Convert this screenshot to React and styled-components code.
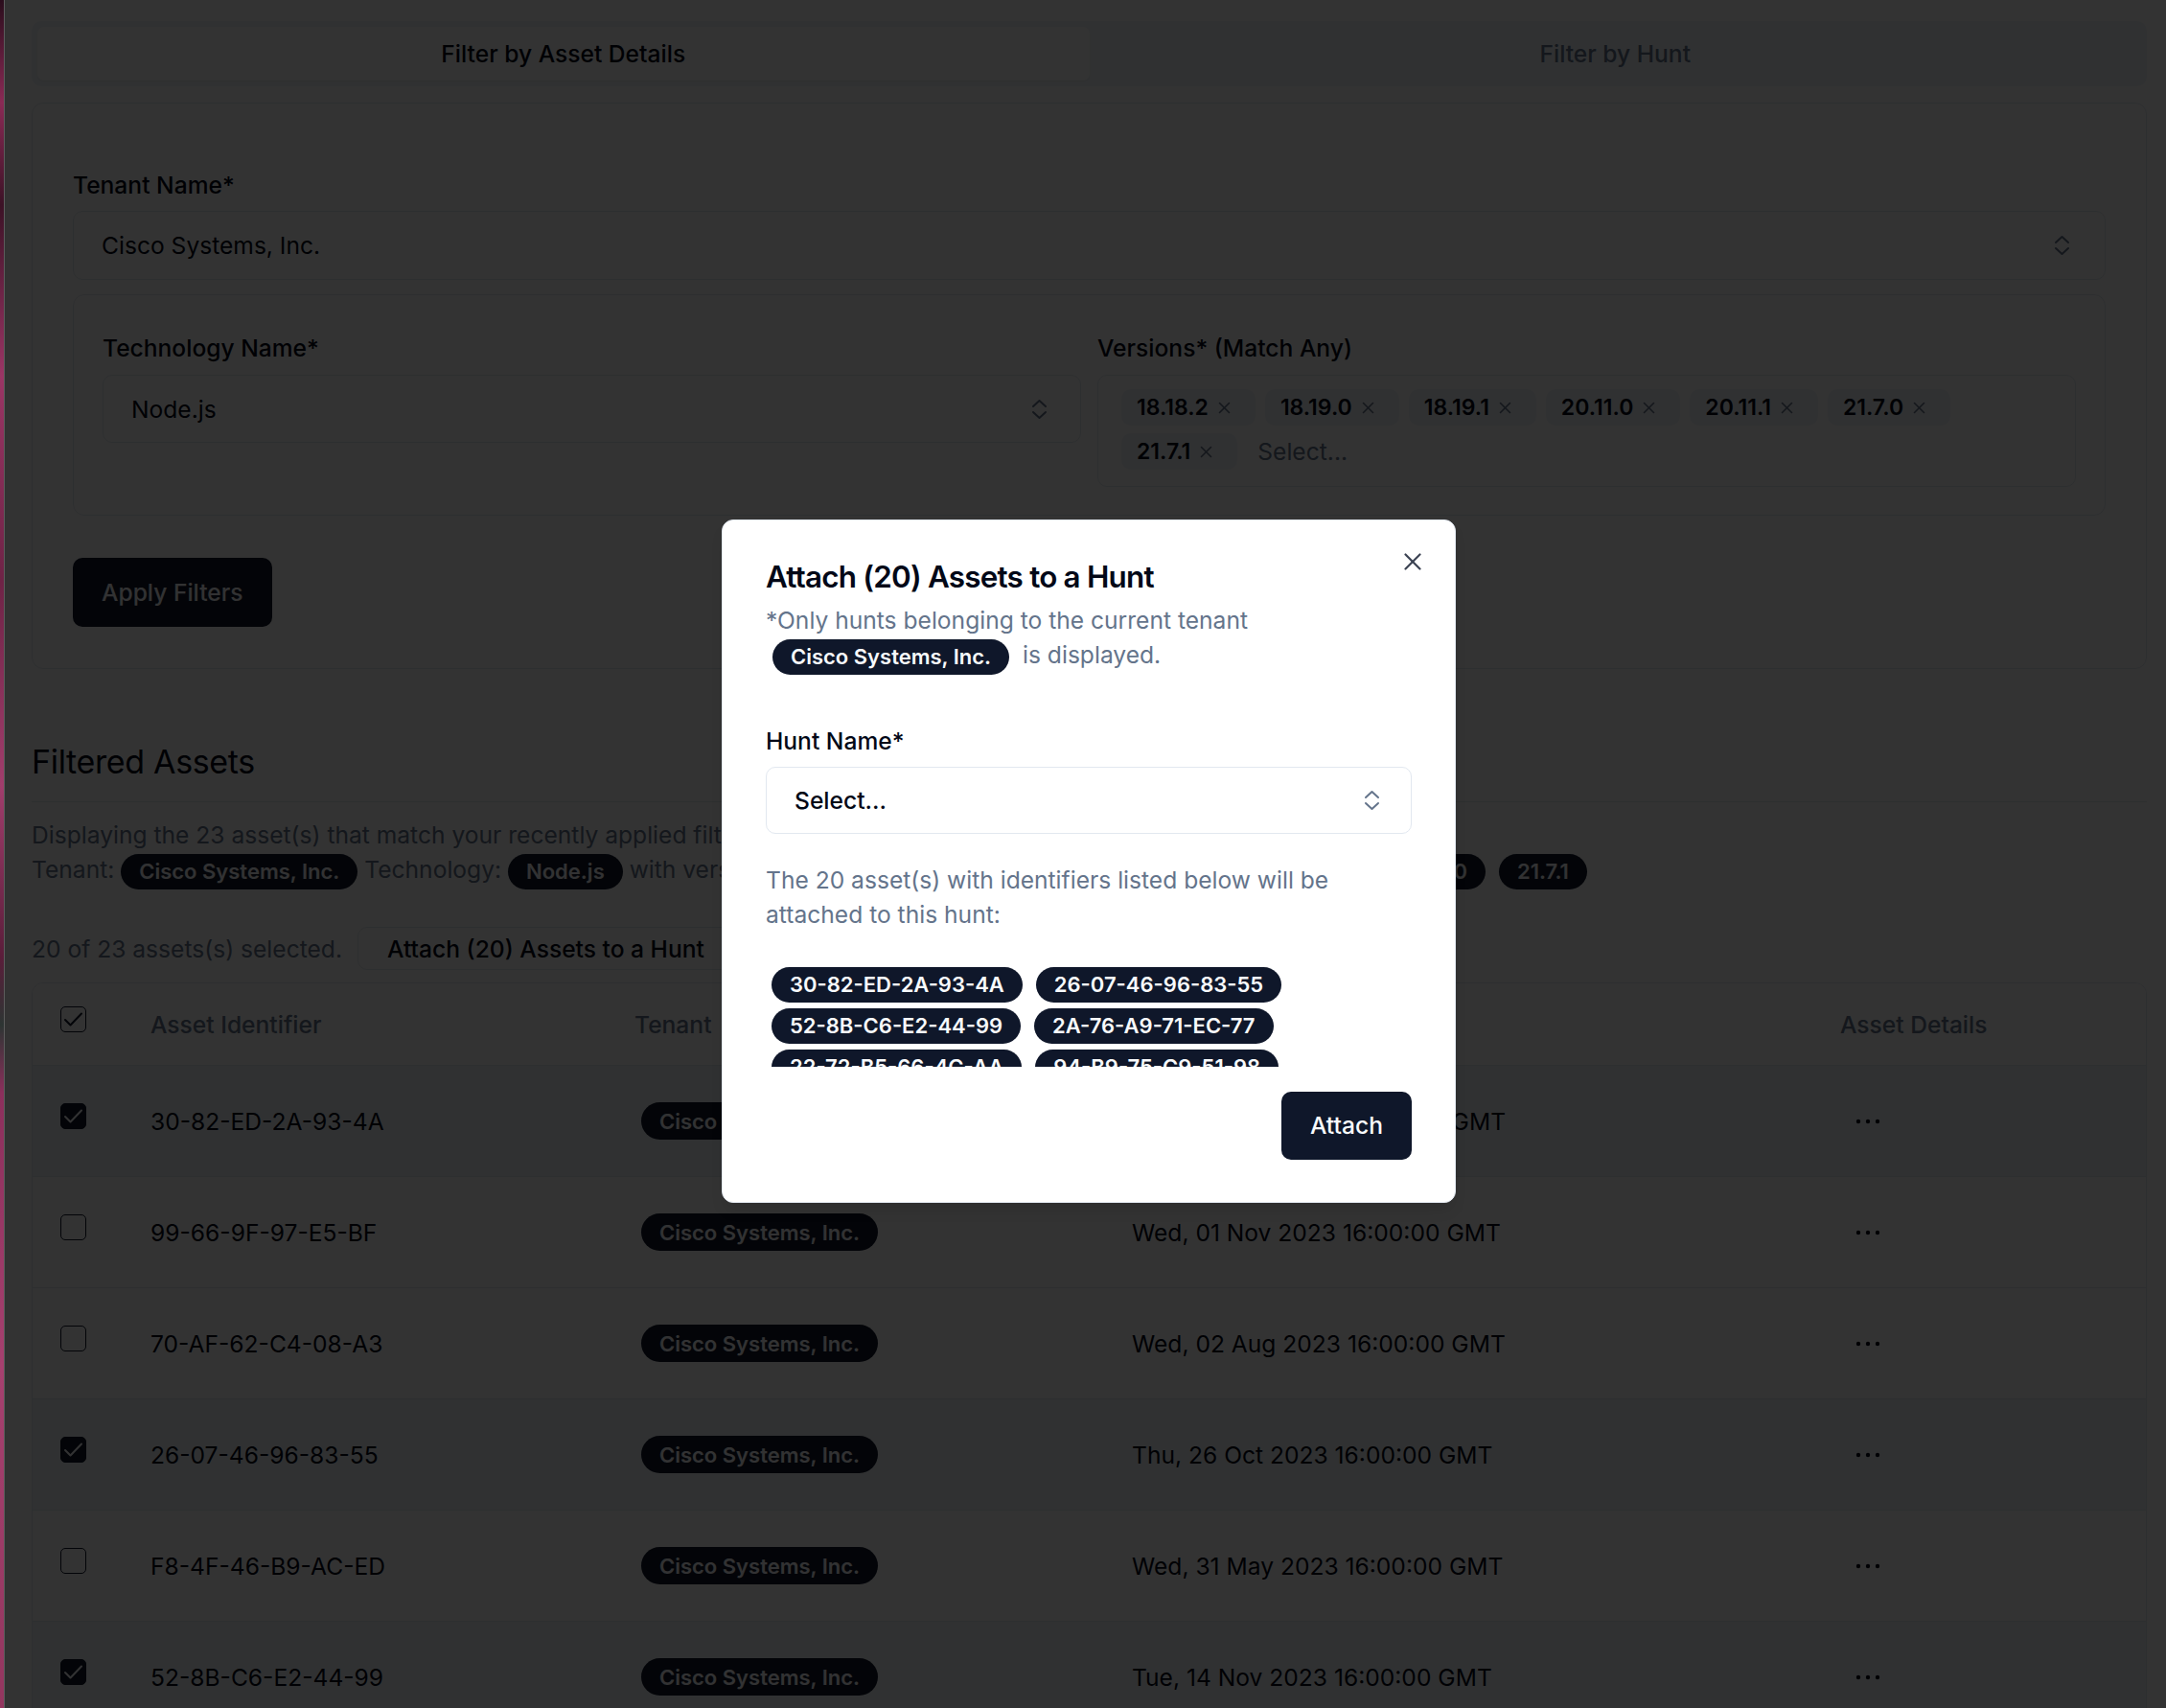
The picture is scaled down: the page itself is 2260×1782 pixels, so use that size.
import React from "react";
import styled, { createGlobalStyle, css } from "styled-components";

const C = {
  fg: "#020817",
  muted: "#64748b",
  mutedBg: "#f1f5f9",
  border: "#e2e8f0",
  primary: "#0f172a",
  primaryFg: "#f8fafc",
};

const FS = 24.6;

const Global = createGlobalStyle`
  *, *::before, *::after { box-sizing: border-box; }
  html, body { margin: 0; padding: 0; background: #333333; }
  body {
    font-family: Inter, "Noto Sans", "Liberation Sans", sans-serif;
    color: ${C.fg};
    -webkit-font-smoothing: antialiased;
  }
`;

const Screen = styled.div`
  display: flex;
  width: 2260px;
  height: 1782px;
  overflow: hidden;
`;

const DesktopEdge = styled.div`
  flex: 0 0 5px;
  background: linear-gradient(
    to bottom,
    #2a0d1c 0%,
    #8a2a55 6%,
    #3c1226 12%,
    #9b3565 22%,
    #6e2346 34%,
    #a13d6c 46%,
    #5a1d3a 56%,
    #2d3533 60%,
    #8c2f5c 64%,
    #a6406f 80%,
    #93365f 100%
  );
  border-right: 1px solid #5c5c5c;
`;

const Viewport = styled.div`
  position: relative;
  flex: 1;
  height: 100%;
  overflow: hidden;
  background: #ffffff;
`;

const Page = styled.main`
  padding: 22px 20px 0 28px;
  display: flex;
  flex-direction: column;
`;

/* ---------- Tabs ---------- */
const TabsList = styled.div`
  display: grid;
  grid-template-columns: 1fr 1fr;
  height: 68px;
  padding: 6px;
  border-radius: 10px;
  background: ${C.mutedBg};
`;

const Tab = styled.div`
  display: flex;
  align-items: center;
  justify-content: center;
  border-radius: 7px;
  font-size: ${FS}px;
  font-weight: 500;
  color: ${(p) => (p.$active ? C.fg : C.muted)};
  background: ${(p) => (p.$active ? "#ffffff" : "transparent")};
  box-shadow: ${(p) => (p.$active ? "0 1px 2px rgba(0,0,0,0.06)" : "none")};
`;

/* ---------- Filter card ---------- */
const FilterCard = styled.section`
  margin-top: 17px;
  border: 1px solid ${C.border};
  border-radius: 12px;
  padding: 70px 42px 43px;
  background: #fff;
  display: flex;
  flex-direction: column;
  align-items: flex-start;
`;

const FieldLabel = styled.label`
  display: block;
  font-size: ${FS}px;
  font-weight: 500;
  line-height: 30px;
  color: ${C.fg};
`;

const Field = styled.div`
  display: flex;
  flex-direction: column;
  align-self: stretch;
`;

const SelectBox = styled.div`
  margin-top: ${(p) => p.$gap || 12}px;
  height: ${(p) => p.$h}px;
  border: 1px solid ${C.border};
  border-radius: 10px;
  display: flex;
  align-items: center;
  justify-content: space-between;
  padding: 0 ${(p) => p.$pr}px 0 29px;
  font-size: ${FS}px;
  font-weight: ${(p) => (p.$strong ? 500 : 400)};
  color: ${C.fg};
  background: #fff;
`;

const Group = styled.div`
  align-self: stretch;
  margin-top: 15px;
  border: 1px solid ${C.border};
  border-radius: 12px;
  padding: 40px 30px 29px;
  display: grid;
  grid-template-columns: 1fr 1fr;
  column-gap: 17px;
`;

const MultiSelect = styled.div`
  margin-top: 13px;
  min-height: 117px;
  border: 1px solid ${C.border};
  border-radius: 10px;
  padding: 14px 24px;
  display: flex;
  flex-wrap: wrap;
  align-items: center;
  align-content: flex-start;
  gap: 8px 10px;
`;

const Chip = styled.span`
  display: inline-flex;
  align-items: center;
  gap: 10px;
  height: 38px;
  padding: 0 26px 0 16px;
  border-radius: 10px;
  background: ${C.mutedBg};
  font-size: 23px;
  font-weight: 600;
  color: ${C.fg};
`;

const Placeholder = styled.span`
  margin-left: 11px;
  font-size: ${FS}px;
  color: ${C.muted};
`;

const PrimaryButton = styled.button`
  margin-top: ${(p) => p.$mt || 0}px;
  height: ${(p) => p.$h}px;
  padding: 0 30px;
  border: none;
  border-radius: 10px;
  background: ${C.primary};
  color: ${C.primaryFg};
  font-family: inherit;
  font-size: ${FS}px;
  font-weight: 500;
`;

/* ---------- Filtered assets ---------- */
const Heading = styled.h2`
  margin: 77px 0 0;
  font-size: 34px;
  font-weight: 400;
  line-height: 40px;
  letter-spacing: -0.01em;
  color: ${C.fg};
`;

const Rule = styled.hr`
  margin: 21px 0 0;
  border: none;
  border-top: 1px solid ${C.border};
`;

const Summary = styled.p`
  margin: 16px 0 0;
  font-size: ${FS}px;
  line-height: 36px;
  color: ${C.muted};
`;

const Badge = styled.span`
  display: inline-flex;
  align-items: center;
  vertical-align: middle;
  height: ${(p) => p.$h || 37}px;
  padding: 0 19px;
  margin: ${(p) => (p.$inline ? -3 : 0)}px ${(p) => p.$mx || 0}px;
  border-radius: 999px;
  background: ${C.primary};
  color: ${C.primaryFg};
  font-size: 22px;
  font-weight: 600;
  line-height: 1;
  white-space: nowrap;
`;

const SelectionBar = styled.div`
  margin-top: 42px;
  display: flex;
  align-items: center;
  gap: 16px;
`;

const MutedText = styled.span`
  font-size: ${FS}px;
  color: ${C.muted};
`;

const OutlineButton = styled.button`
  height: 45px;
  padding: 0 30px;
  border: 1px solid ${C.border};
  border-radius: 10px;
  background: #fff;
  font-family: inherit;
  font-size: ${FS}px;
  font-weight: 500;
  color: ${C.fg};
`;

const TableBox = styled.div`
  margin-top: 13px;
  border: 1px solid ${C.border};
  border-radius: 12px;
  overflow: hidden;
`;

const Row = styled.div`
  display: grid;
  grid-template-columns: 95px 505px 519px 739px 1fr;
  align-items: center;
  height: ${(p) => (p.$head ? 85 : 116)}px;
  border-top: ${(p) => (p.$head ? "none" : `1px solid ${C.border}`)};
  background: ${(p) => (p.$selected ? C.mutedBg : "#fff")};
`;

const Cell = styled.div`
  padding-left: 28px;
  font-size: ${FS}px;
  display: flex;
  align-items: center;
  color: ${(p) => (p.$head ? C.muted : C.fg)};
  font-weight: ${(p) => (p.$head ? 500 : 400)};
  ${(p) =>
    p.$shift &&
    css`
      padding-left: 35px;
    `}
`;

const Box = styled.span`
  width: 27px;
  height: 27px;
  margin-left: 1px;
  border-radius: 5px;
  border: 1.7px solid ${C.primary};
  background: ${(p) => (p.$checked ? C.primary : "transparent")};
  display: inline-flex;
  align-items: center;
  justify-content: center;
  transform: translateY(-5px);
`;

const DotsButton = styled.span`
  width: 54px;
  height: 54px;
  margin-left: 2px;
  display: inline-flex;
  align-items: center;
  justify-content: center;
`;

/* ---------- Overlay + dialog ---------- */
const Overlay = styled.div`
  position: absolute;
  inset: 0;
  background: rgba(0, 0, 0, 0.8);
`;

const Dialog = styled.div`
  position: absolute;
  left: 748px;
  top: 542px;
  width: 766px;
  background: #fff;
  border: 1px solid ${C.border};
  border-radius: 12px;
  padding: 44px 45px 44px;
  display: flex;
  flex-direction: column;
  box-shadow: 0 10px 15px -3px rgba(0, 0, 0, 0.1);
`;

const CloseButton = styled.span`
  position: absolute;
  top: 34px;
  right: 35px;
  width: 18px;
  height: 18px;
  display: flex;
`;

const DialogTitle = styled.h2`
  margin: 0;
  font-size: 31.4px;
  font-weight: 600;
  line-height: 31px;
  letter-spacing: -0.025em;
  color: ${C.fg};
`;

const DialogText = styled.p`
  margin: ${(p) => p.$mt}px 0 0;
  font-size: ${FS}px;
  line-height: 36px;
  color: ${C.muted};
`;

const DialogLabel = styled(FieldLabel)`
  margin-top: 54px;
`;

const IdList = styled.div`
  margin-top: 34px;
  height: 107px;
  overflow: hidden;
  padding: 3px 6px;
  display: flex;
  flex-wrap: wrap;
  align-content: flex-start;
  gap: 6px 14px;
`;

const DialogFooter = styled.div`
  margin-top: 26px;
  display: flex;
  justify-content: flex-end;
`;

/* ---------- Icons ---------- */
const ChevronsUpDown = () => (
  <svg width="17" height="22" viewBox="0 0 17 22" fill="none" stroke={C.muted} strokeWidth="2" strokeLinecap="round" strokeLinejoin="round">
    <polyline points="2,8 8.5,2 15,8" />
    <polyline points="2,14 8.5,20 15,14" />
  </svg>
);

const SmallX = () => (
  <svg width="13" height="13" viewBox="0 0 13 13" fill="none" stroke={C.muted} strokeWidth="1.6" strokeLinecap="round">
    <line x1="1.5" y1="1.5" x2="11.5" y2="11.5" />
    <line x1="11.5" y1="1.5" x2="1.5" y2="11.5" />
  </svg>
);

const CloseX = () => (
  <svg width="18" height="18" viewBox="0 0 18 18" fill="none" stroke="#3b4252" strokeWidth="2.2" strokeLinecap="round">
    <line x1="1.5" y1="1.5" x2="16.5" y2="16.5" />
    <line x1="16.5" y1="1.5" x2="1.5" y2="16.5" />
  </svg>
);

const Check = ({ color }) => (
  <svg width="21" height="17" viewBox="0 0 21 17" fill="none" stroke={color} strokeWidth="2" strokeLinecap="round" strokeLinejoin="round">
    <polyline points="2,9 7.5,14.5 19,2.5" />
  </svg>
);

const Ellipsis = () => (
  <svg width="26" height="6" viewBox="0 0 26 6" fill={C.fg}>
    <circle cx="3" cy="3" r="2.2" />
    <circle cx="13" cy="3" r="2.2" />
    <circle cx="23" cy="3" r="2.2" />
  </svg>
);

const Checkbox = ({ checked, head }) => (
  <Box $checked={checked && !head}>
    {checked && <Check color={head ? C.primary : C.primaryFg} />}
  </Box>
);

/* ---------- Data ---------- */
const versions = ["18.18.2", "18.19.0", "18.19.1", "20.11.0", "20.11.1", "21.7.0", "21.7.1"];

const rows = [
  { id: "30-82-ED-2A-93-4A", date: "Wed, 08 Nov 2023 16:00:00 GMT", sel: true },
  { id: "99-66-9F-97-E5-BF", date: "Wed, 01 Nov 2023 16:00:00 GMT", sel: false },
  { id: "70-AF-62-C4-08-A3", date: "Wed, 02 Aug 2023 16:00:00 GMT", sel: false },
  { id: "26-07-46-96-83-55", date: "Thu, 26 Oct 2023 16:00:00 GMT", sel: true },
  { id: "F8-4F-46-B9-AC-ED", date: "Wed, 31 May 2023 16:00:00 GMT", sel: false },
  { id: "52-8B-C6-E2-44-99", date: "Tue, 14 Nov 2023 16:00:00 GMT", sel: true },
];

const selectedIds = [
  "30-82-ED-2A-93-4A",
  "26-07-46-96-83-55",
  "52-8B-C6-E2-44-99",
  "2A-76-A9-71-EC-77",
  "22-72-B5-66-4C-AA",
  "94-B9-75-C9-51-98",
  "1C-3E-77-A0-5D-42",
  "8F-20-D1-6B-93-0E",
  "47-CA-19-E8-72-B3",
  "B0-5F-88-2D-14-C6",
  "63-E1-4A-9C-07-DB",
  "D5-38-F2-61-AE-90",
  "0A-9D-57-C3-B8-21",
  "7E-62-0B-F4-39-85",
  "C9-14-A6-5E-D0-7F",
  "3B-F7-28-91-6C-E4",
  "E2-4C-B9-07-83-1A",
  "58-A3-6D-FE-20-97",
  "AF-81-35-C7-4B-D6",
  "14-D9-E0-5A-B2-6F",
];

export default function App() {
  return (
    <>
      <Global />
      <Screen>
        <DesktopEdge />
        <Viewport>
          <Page>
            <TabsList>
              <Tab $active>Filter by Asset Details</Tab>
              <Tab>Filter by Hunt</Tab>
            </TabsList>

            <FilterCard>
              <Field>
                <FieldLabel>Tenant Name*</FieldLabel>
                <SelectBox $h={72} $pr={36}>
                  <span>Cisco Systems, Inc.</span>
                  <ChevronsUpDown />
                </SelectBox>
              </Field>

              <Group>
                <Field>
                  <FieldLabel>Technology Name*</FieldLabel>
                  <SelectBox $h={71} $gap={13} $pr={34}>
                    <span>Node.js</span>
                    <ChevronsUpDown />
                  </SelectBox>
                </Field>
                <Field>
                  <FieldLabel>Versions* (Match Any)</FieldLabel>
                  <MultiSelect>
                    {versions.map((v) => (
                      <Chip key={v}>
                        {v}
                        <SmallX />
                      </Chip>
                    ))}
                    <Placeholder>Select...</Placeholder>
                  </MultiSelect>
                </Field>
              </Group>

              <PrimaryButton $mt={44} $h={72}>Apply Filters</PrimaryButton>
            </FilterCard>

            <Heading>Filtered Assets</Heading>
            <Rule />
            <Summary>
              Displaying the 23 asset(s) that match your recently applied filters:
              <br />
              Tenant: <Badge $inline>Cisco Systems, Inc.</Badge> Technology:{" "}
              <Badge $inline>Node.js</Badge> with version(s):{" "}
              {versions.map((v) => (
                <React.Fragment key={v}>
                  <Badge $inline $mx={3.5}>{v}</Badge>{" "}
                </React.Fragment>
              ))}
            </Summary>

            <SelectionBar>
              <MutedText>20 of 23 assets(s) selected.</MutedText>
              <OutlineButton>Attach (20) Assets to a Hunt</OutlineButton>
            </SelectionBar>

            <TableBox>
              <Row $head>
                <Cell $head>
                  <Checkbox checked head />
                </Cell>
                <Cell $head>Asset Identifier</Cell>
                <Cell $head>Tenant</Cell>
                <Cell $head>Last Seen</Cell>
                <Cell $head>Asset Details</Cell>
              </Row>
              {rows.map((r) => (
                <Row key={r.id} $selected={r.sel}>
                  <Cell>
                    <Checkbox checked={r.sel} />
                  </Cell>
                  <Cell>{r.id}</Cell>
                  <Cell $shift>
                    <Badge $h={39}>Cisco Systems, Inc.</Badge>
                  </Cell>
                  <Cell>{r.date}</Cell>
                  <Cell>
                    <DotsButton>
                      <Ellipsis />
                    </DotsButton>
                  </Cell>
                </Row>
              ))}
            </TableBox>
          </Page>

          <Overlay />

          <Dialog role="dialog">
            <CloseButton>
              <CloseX />
            </CloseButton>
            <DialogTitle>Attach (20) Assets to a Hunt</DialogTitle>
            <DialogText $mt={11}>
              *Only hunts belonging to the current tenant <Badge $mx={7}>Cisco Systems, Inc.</Badge> is displayed.
            </DialogText>
            <DialogLabel>Hunt Name*</DialogLabel>
            <SelectBox $h={70} $pr={32} $strong>
              <span>Select...</span>
              <ChevronsUpDown />
            </SelectBox>
            <DialogText $mt={30}>
              The 20 asset(s) with identifiers listed below will be attached to this hunt:
            </DialogText>
            <IdList>
              {selectedIds.map((id) => (
                <Badge key={id}>{id}</Badge>
              ))}
            </IdList>
            <DialogFooter>
              <PrimaryButton $h={71}>Attach</PrimaryButton>
            </DialogFooter>
          </Dialog>
        </Viewport>
      </Screen>
    </>
  );
}
